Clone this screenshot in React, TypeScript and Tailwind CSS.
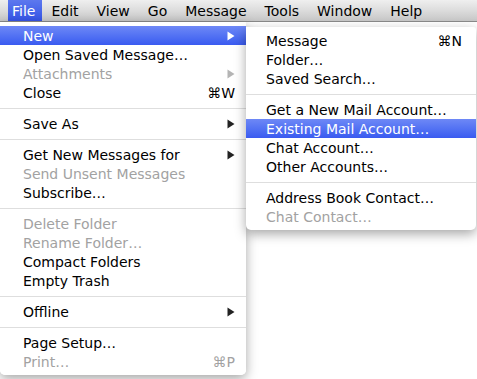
import React from "react";

type Item =
  | { kind: "sep" }
  | {
      kind?: "item";
      label: string;
      shortcut?: string;
      submenu?: boolean;
      disabled?: boolean;
      active?: boolean;
    };

const fileMenu: Item[] = [
  { label: "New", submenu: true, active: true },
  { label: "Open Saved Message…" },
  { label: "Attachments", submenu: true, disabled: true },
  { label: "Close", shortcut: "⌘W" },
  { kind: "sep" },
  { label: "Save As", submenu: true },
  { kind: "sep" },
  { label: "Get New Messages for", submenu: true },
  { label: "Send Unsent Messages", disabled: true },
  { label: "Subscribe…" },
  { kind: "sep" },
  { label: "Delete Folder", disabled: true },
  { label: "Rename Folder…", disabled: true },
  { label: "Compact Folders" },
  { label: "Empty Trash" },
  { kind: "sep" },
  { label: "Offline", submenu: true },
  { kind: "sep" },
  { label: "Page Setup…" },
  { label: "Print…", shortcut: "⌘P", disabled: true },
];

const newMenu: Item[] = [
  { label: "Message", shortcut: "⌘N" },
  { label: "Folder…" },
  { label: "Saved Search…" },
  { kind: "sep" },
  { label: "Get a New Mail Account…" },
  { label: "Existing Mail Account…", active: true },
  { label: "Chat Account…" },
  { label: "Other Accounts…" },
  { kind: "sep" },
  { label: "Address Book Contact…" },
  { label: "Chat Contact…", disabled: true },
];

const titles = ["Edit", "View", "Go", "Message", "Tools", "Window", "Help"];

function Arrow({ color }: { color: string }) {
  return (
    <svg width="8" height="10" viewBox="0 0 8 10" className="shrink-0">
      <polygon points="0.5,0.5 7.5,5 0.5,9.5" fill={color} />
    </svg>
  );
}

function MenuRows({ items, padLeft, padRight }: { items: Item[]; padLeft: string; padRight: string }) {
  return (
    <>
      {items.map((item, index) => {
        if (item.kind === "sep") {
          return (
            <div key={index} className="flex h-[12px] items-center">
              <div className="h-px w-full bg-[#dedede]" />
            </div>
          );
        }
        const textColor = item.active ? "text-white" : item.disabled ? "text-[#a2a2a2]" : "text-black";
        return (
          <div
            key={index}
            className={`flex h-[19px] items-center justify-between ${padLeft} ${padRight} ${textColor} ${
              item.active ? "bg-gradient-to-b from-[#6e88f6] to-[#3a5af0]" : ""
            }`}
          >
            <span>{item.label}</span>
            {item.shortcut && <span>{item.shortcut}</span>}
            {item.submenu && (
              <Arrow color={item.active ? "#ffffff" : item.disabled ? "#b4b4b4" : "#222222"} />
            )}
          </div>
        );
      })}
    </>
  );
}

export default function App() {
  return (
    <div className="h-[379px] w-[477px] overflow-hidden bg-white text-[14px] leading-none font-['DejaVu_Sans',sans-serif]">
      {/* menu bar */}
      <div className="flex h-[22px] items-stretch border-b border-[#8a8a8a] bg-gradient-to-b from-[#efefef] via-[#dcdcdc] to-[#c6c6c6] text-black">
        <div className="ml-[8px] flex items-center bg-gradient-to-b from-[#5d78ee] to-[#3553e6] pl-[4px] pr-[7px] text-white">
          File
        </div>
        {titles.map((title) => (
          <div key={title} className="flex items-center px-[9px]">
            {title}
          </div>
        ))}
      </div>

      <div className="relative">
        {/* File menu */}
        <div className="w-[246px] rounded-b-[5px] bg-white/95 pt-[4px] pb-[4px] shadow-[0_4px_12px_rgba(0,0,0,0.35)]">
          <MenuRows items={fileMenu} padLeft="pl-[23px]" padRight="pr-[11px]" />
        </div>

        {/* New submenu */}
        <div className="absolute left-[246px] top-[5px] w-[230px] rounded-b-[5px] rounded-tr-[3px] bg-white pt-[4px] pb-[4px] shadow-[0_4px_12px_rgba(0,0,0,0.35)]">
          <MenuRows items={newMenu} padLeft="pl-[20px]" padRight="pr-[14px]" />
        </div>
      </div>
    </div>
  );
}
